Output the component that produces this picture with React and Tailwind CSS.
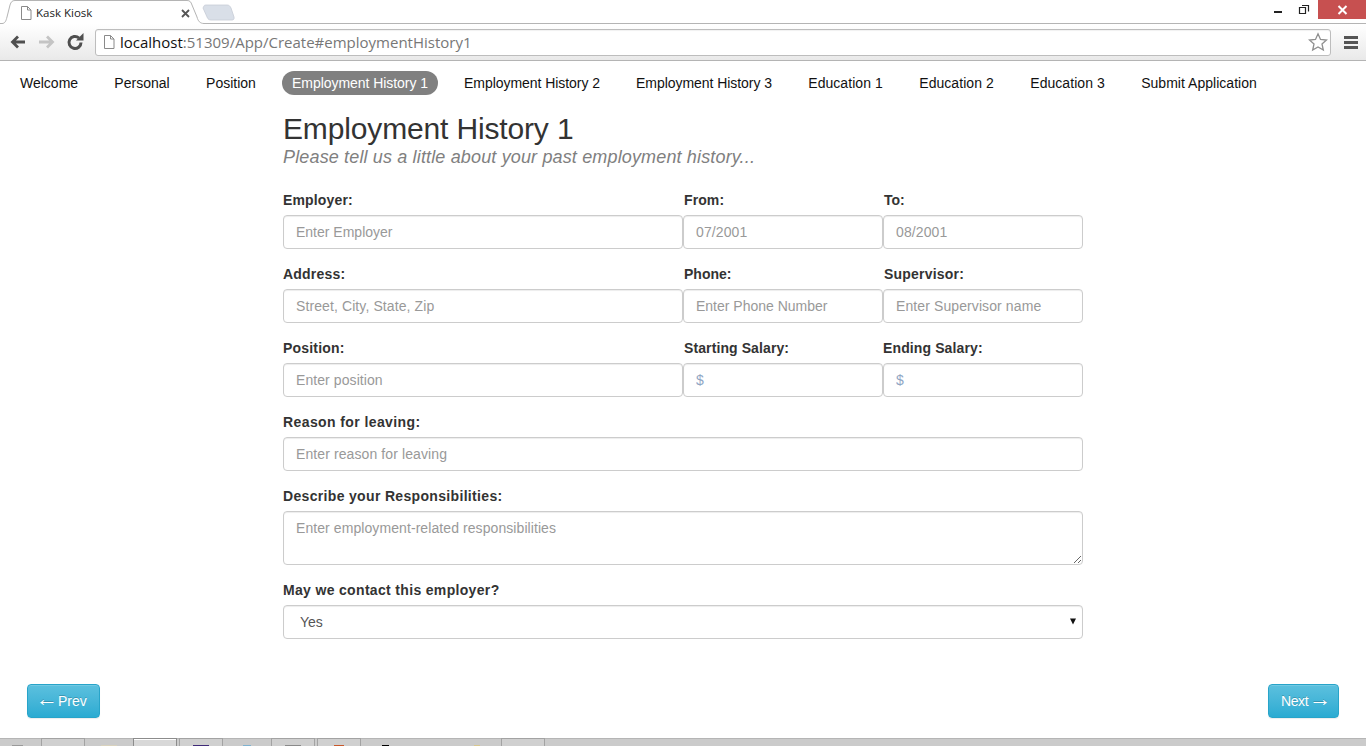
import React from "react";

const NAV = [
  ["Welcome", "w-[58px]"],
  ["Personal", "w-[56px]"],
  ["Position", "w-[50px]"],
  ["Employment History 1", "w-[136px] tracking-[-0.05px]"],
  ["Employment History 2", "w-[136px] tracking-[-0.05px]"],
  ["Employment History 3", "w-[136px] tracking-[-0.05px]"],
  ["Education 1", "w-[75px] tracking-[0.05px]"],
  ["Education 2", "w-[75px] tracking-[0.05px]"],
  ["Education 3", "w-[75px] tracking-[0.05px]"],
  ["Submit Application", "w-[116px] tracking-[0.03px]"],
];

const inputCls = "block w-full h-[34px] rounded-[4px] border border-[#ccc] bg-white px-3 text-[14px] text-[#555] shadow-[inset_0_1px_1px_rgba(0,0,0,0.075)] outline-none";
const labelCls = "block h-[20px] mb-[5px] text-[14px] leading-[20px] font-bold text-[#333] whitespace-nowrap";

function Field({ label, placeholder, lab = "tracking-[0.2px]", ph = "", dollar }) {
  return (
    <div className="flex flex-col">
      <label className={labelCls + " " + lab}>{label}</label>
      <input className={inputCls + " " + ph + " " + (dollar ? "placeholder:text-[#8fa6c4]" : "placeholder:text-[#999]")} placeholder={placeholder} readOnly />
    </div>
  );
}

function FileIcon() {
  return (
    <svg className="shrink-0" width="14" height="16" viewBox="0 0 14 16" fill="none">
      <path d="M2.500 1.500h6l3.500 3.500v9.500h-9.500z" fill="#fff" stroke="#8a8a8a" />
      <path d="M8.500 1.500v3.500h3.500" stroke="#8a8a8a" />
    </svg>
  );
}

function TabStrip() {
  return (
    <div className="flex h-[24px] bg-white items-start">
      <svg width="240" height="24" viewBox="0 0 240 24" className="shrink-0">
        <path d="M0 23.500 L2 23.500 C5 23.500 6 21 7 17 L10 5 C11 2 12 .5 15 .5 L187 .5 C190 .5 191 2 192 5 L197 17 C198 21 200 23.500 204 23.500 L240 23.500" fill="#fff" stroke="#b4b4b4" />
        <path d="M204 6 C204 5.500 205 5 206 5 L227 5 C229 5 230 6 231 8 L234 17 C234.500 19 233.500 20 232 20 L211 20 C209 20 208 19 207.500 18 L203 8 Z" fill="#d9dfe8" stroke="#c6ccd6" strokeWidth="0.8" />
      </svg>
      <div className="relative flex-1 h-[24px] border-b border-[#b4b4b4]">
        <div className="absolute right-0 top-0 flex items-start">
          <svg width="54" height="19" viewBox="0 0 54 19" fill="none">
            <rect x="10" y="11" width="8" height="2" fill="#222" />
            <path d="M35.500 7.500h6v6h-6z" stroke="#222" strokeWidth="1.200" />
            <path d="M38 5.500h6.500v6" stroke="#222" strokeWidth="1.200" />
          </svg>
          <div className="w-[48px] h-[19px] bg-[#c75050] flex items-center justify-center">
            <svg width="11" height="10" viewBox="0 0 11 10"><path d="M1.500 1 L9.500 9 M9.500 1 L1.500 9" stroke="#fff" strokeWidth="2" /></svg>
          </div>
        </div>
      </div>
    </div>
  );
}

function TabLabel() {
  return (
    <div className="absolute left-[19px] top-[5px] w-[172px] flex items-center">
      <FileIcon />
      <span className="ml-[3px] text-[11.5px] leading-[16px] text-[#222] font-['Open_Sans',sans-serif]">Kask Kiosk</span>
      <svg className="ml-auto mr-[1px]" width="9" height="9" viewBox="0 0 9 9"><path d="M1 1 L8 8 M8 1 L1 8" stroke="#555" strokeWidth="1.800" /></svg>
    </div>
  );
}

function Toolbar() {
  return (
    <div className="h-[37px] bg-gradient-to-b from-white to-[#e9e9e9] border-b border-[#b4b4b4] flex items-center">
      <svg className="ml-[9px] shrink-0" width="76" height="20" viewBox="0 0 76 20" fill="none">
        <path d="M16 10H3 M9 4.500l-5.500 5.500 5.500 5.500" stroke="#4f4f4f" strokeWidth="2.800" />
        <path d="M30 10H44 M38 4.500l5.500 5.500-5.500 5.500" stroke="#c4c4c4" strokeWidth="2.800" />
        <path d="M72 10.500a6 6 0 1 1-2-4.500" stroke="#4f4f4f" strokeWidth="3" />
        <path d="M67 8.500h7.500V1z" fill="#4f4f4f" />
      </svg>
      <div className="ml-[10px] w-[1236px] h-[27px] shrink-0 rounded-[3px] border border-[#bdbdbd] bg-white flex items-center pl-[6px] shadow-[inset_0_1px_1px_rgba(0,0,0,0.06)]">
        <FileIcon />
        <span className="ml-[4px] text-[15px] leading-[24px] text-[#777] font-['Open_Sans',sans-serif] whitespace-nowrap"><span className="text-[#111]">localhost</span>:51309/App/Create#employmentHistory1</span>
        <svg className="ml-auto mr-[2px]" width="20" height="20" viewBox="0 0 20 20" fill="#fff"><path d="M10 1.800l2.500 5.600 6 .6-4.500 4 1.300 6-5.300-3.100-5.300 3.100 1.300-6-4.500-4 6-.6z" stroke="#8f8f8f" strokeWidth="1.300" /></svg>
      </div>
      <svg className="ml-[13px] shrink-0" width="14" height="14" viewBox="0 0 14 14"><path d="M0 1h14v3H0zM0 6h14v3H0zM0 11h14v3H0z" fill="#555" /></svg>
    </div>
  );
}

function Nav() {
  return (
    <div className="flex gap-[16px] pl-[10px] pt-[10px] text-[14px] leading-[24px] text-[#111]">
      {NAV.map(([n, w]) => (
        <span key={n} className={"box-content px-[10px] h-[24px] rounded-[12px] whitespace-nowrap text-center " + w + (n === "Employment History 1" ? " bg-[#808080] text-white" : "")}>{n}</span>
      ))}
    </div>
  );
}

function Form() {
  return (
    <div className="w-[800px] ml-[283px]">
      <h1 className="mt-[16px] text-[30px] leading-[35px] font-normal text-[#333] tracking-[-0.15px]">Employment History 1</h1>
      <p className="mt-[1px] text-[18px] leading-[20px] italic text-[#808080] tracking-[0.15px]">Please tell us a little about your past employment history...</p>
      <div className="mt-[23px] flex flex-col gap-[15px]">
        <div className="grid grid-cols-[400px_200px_200px]">
          <Field label="Employer:" placeholder="Enter Employer" lab="tracking-[0.15px]" />
          <Field label="From:" placeholder="07/2001" lab="pl-px tracking-[0.1px]" ph="placeholder:tracking-[0.1px]" />
          <Field label="To:" placeholder="08/2001" lab="pl-px" ph="placeholder:tracking-[0.1px]" />
        </div>
        <div className="grid grid-cols-[400px_200px_200px]">
          <Field label="Address:" placeholder="Street, City, State, Zip" ph="placeholder:tracking-[0.1px]" />
          <Field label="Phone:" placeholder="Enter Phone Number" lab="pl-px" />
          <Field label="Supervisor:" placeholder="Enter Supervisor name" lab="pl-px tracking-[0.2px]" ph="placeholder:tracking-[0.1px]" />
        </div>
        <div className="grid grid-cols-[400px_200px_200px]">
          <Field label="Position:" placeholder="Enter position" ph="placeholder:tracking-[0.08px]" />
          <Field label="Starting Salary:" placeholder="$" dollar lab="pl-px tracking-[0.1px]" />
          <Field label="Ending Salary:" placeholder="$" dollar lab="tracking-[0.12px]" />
        </div>
        <Field label="Reason for leaving:" placeholder="Enter reason for leaving" lab="tracking-[0.4px]" ph="placeholder:tracking-[0.1px]" />
        <div className="flex flex-col">
          <label className={labelCls + " tracking-[0.33px]"}>Describe your Responsibilities:</label>
          <textarea className="block w-full h-[54px] rounded-[4px] border border-[#ccc] bg-white px-3 py-[6px] text-[14px] leading-[20px] text-[#555] placeholder:text-[#999] placeholder:tracking-[0.08px] shadow-[inset_0_1px_1px_rgba(0,0,0,0.075)] outline-none" placeholder="Enter employment-related responsibilities" readOnly />
        </div>
        <div className="flex flex-col">
          <label className={labelCls + " tracking-[0.33px]"}>May we contact this employer?</label>
          <div className="relative">
            <select className="block w-full h-[34px] appearance-none rounded-[4px] border border-[#ccc] bg-white pl-[16px] pr-3 text-[14px] text-[#555] shadow-[inset_0_1px_1px_rgba(0,0,0,0.075)] outline-none" defaultValue="Yes">
              <option>Yes</option>
              <option>No</option>
            </select>
            <svg className="absolute right-[7px] top-[13px]" width="6" height="7" viewBox="0 0 6 7"><path d="M0 .5h6L3 6.500z" fill="#111" /></svg>
          </div>
        </div>
      </div>
    </div>
  );
}

function Btn({ children, className = "" }) {
  return (
    <button className={"h-[34px] flex items-center justify-start pl-[12px] rounded-[4px] border border-[#28a4c9] bg-gradient-to-b from-[#5bc0de] to-[#2aabd2] text-white text-[14px] leading-[20px] [text-shadow:0_-1px_0_rgba(0,0,0,0.2)] shadow-[inset_0_1px_0_rgba(255,255,255,0.15),0_1px_1px_rgba(0,0,0,0.075)] " + className}>{children}</button>
  );
}

function Arrow({ children, className = "" }) {
  return <span className={"inline-block text-[22px] leading-[20px] text-left whitespace-nowrap mb-[5px] " + className}>{children}</span>;
}

const SLOTS = [
  ["", "#9a9a9a", 11],
  ["b", "", 0],
  ["", "#d9d2bd", 16],
  ["a", "", 0],
  ["b", "#3f2a78", 16],
  ["", "#7fb2d0", 8],
  ["b", "#8a8a8a", 16],
  ["b", "#c9582a", 10],
  ["", "#000", 7],
  ["", "", 0],
  ["", "#d8c78f", 6],
  ["b", "", 0],
];

function Taskbar() {
  return (
    <div className="mt-auto h-[8px] bg-[#cbcbcb] shadow-[inset_0_1px_0_#b5b5b5] flex overflow-hidden">
      <div className="flex gap-[2px] -ml-[5px]">
        {SLOTS.map(([k, c, w], i) => (
          <div key={i} className={"w-[44px] h-[8px] flex justify-center pt-[6px] border-x border-t " + (k === "b" ? "border-[#a3a3a3] bg-[#d0d0d0]" : k === "a" ? "border-[#8c8c8c] bg-[#d8d8d8] shadow-[inset_0_1px_0_#fff]" : "border-transparent")}>
            {c ? <div className="h-[2px]" style={{ width: w, background: c }} /> : null}
          </div>
        ))}
      </div>
    </div>
  );
}

export default function App() {
  return (
    <div className="w-[1366px] h-[746px] overflow-hidden flex flex-col bg-white font-['Liberation_Sans',Arial,sans-serif]">
      <div className="relative">
        <TabStrip />
        <TabLabel />
      </div>
      <Toolbar />
      <Nav />
      <Form />
      <div className="flex justify-between mt-[45px] pl-[27px] pr-[27px]">
        <Btn className="w-[73px]"><Arrow className="-ml-[4px] w-[22px]">←</Arrow><span>Prev</span></Btn>
        <Btn className="w-[71px]"><span className="tracking-[-0.4px]">Next</span><Arrow className="ml-[1px] w-[24px]">→</Arrow></Btn>
      </div>
      <Taskbar />
    </div>
  );
}
